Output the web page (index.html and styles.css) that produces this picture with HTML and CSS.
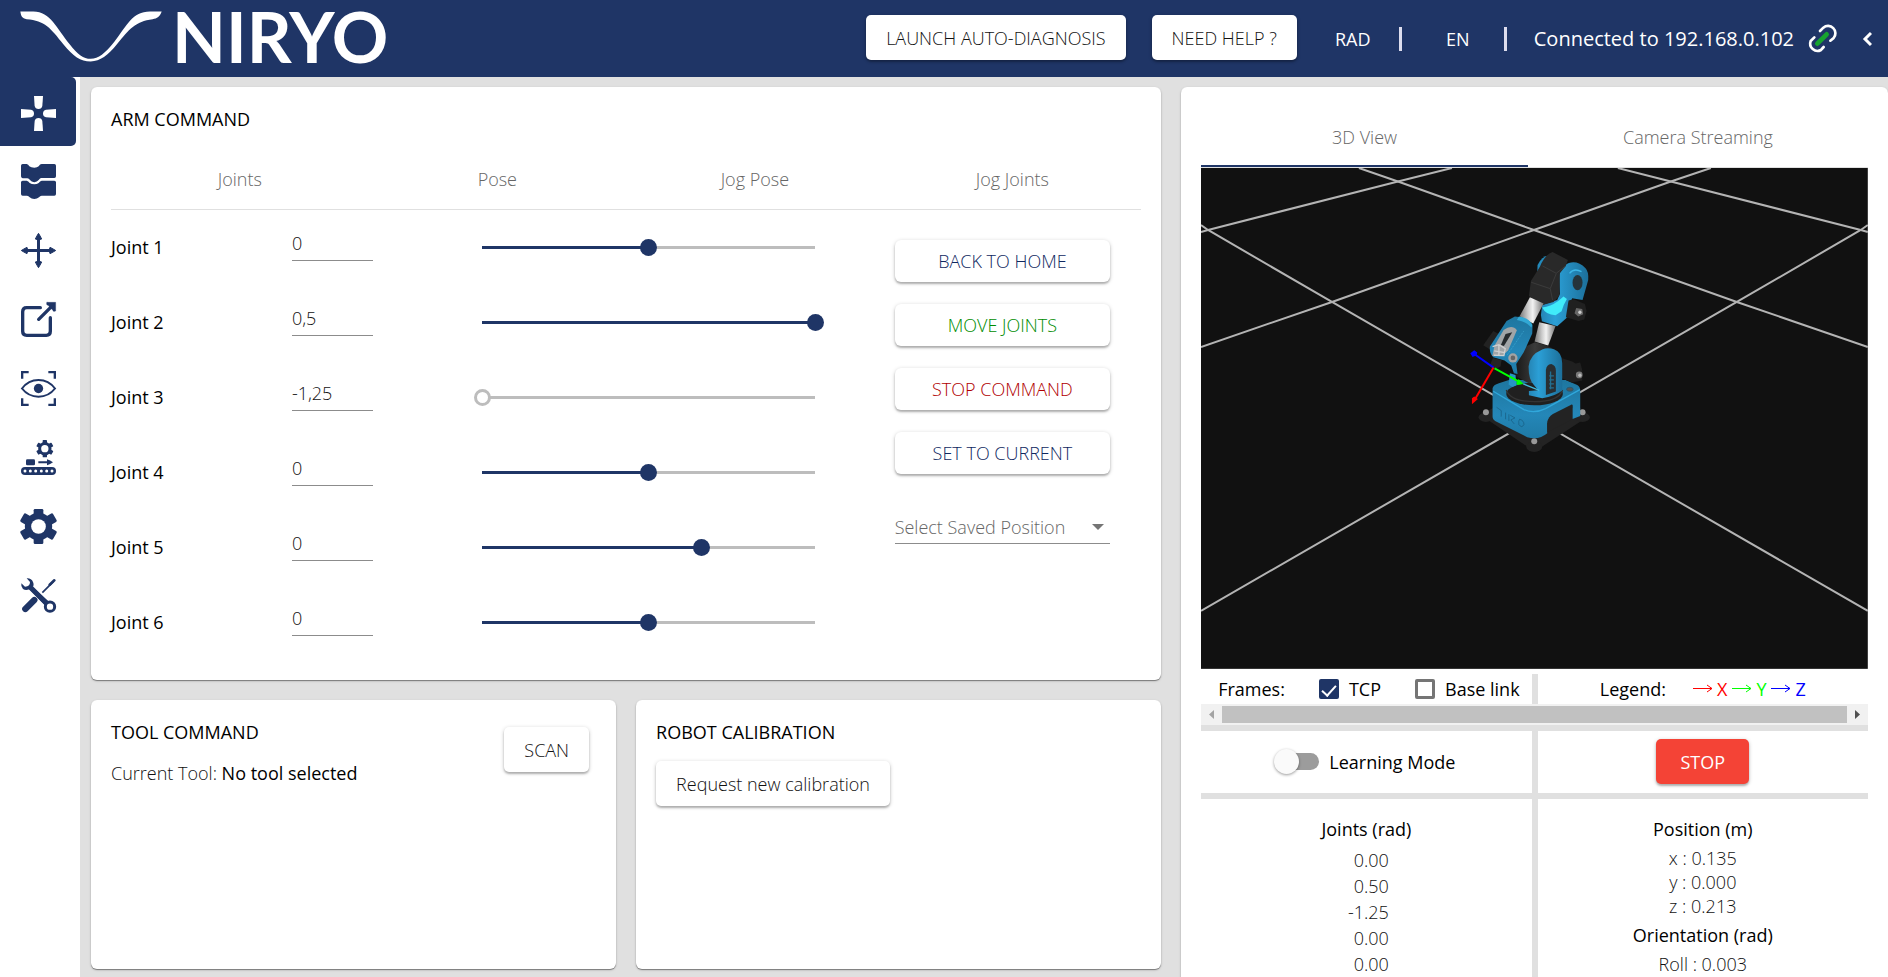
FILE: index.html
```html
<!DOCTYPE html>
<html lang="en">
<head>
<meta charset="utf-8">
<title>Niryo Studio</title>
<link rel="stylesheet" href="styles.css">
</head>
<body>
<header class="topbar">
  <a class="brand" href="#" aria-label="Niryo home">
    <svg class="brand-wave" viewBox="0 0 426 152" aria-hidden="true"><path fill="#fff" d="M1 1H40C92 2 110 52 149 99C174 131 190 142 212 143C236 142 254 128 283 92C322 42 336 2 390 1H425C420 17 411 22 398 24C346 30 327 55 292 98C263 134 241 150 212 151C181 150 160 136 130 99C92 51 75 28 20 24C6 22 3 14 1 1Z"/></svg>
    <span class="brand-name">NIRYO</span>
  </a>
  <div class="top-actions">
    <button class="btn">LAUNCH AUTO-DIAGNOSIS</button>
    <button class="btn">NEED HELP ?</button>
  </div>
  <div class="top-settings">
    <button class="top-link">RAD</button>
    <button class="top-link">EN</button>
  </div>
  <div class="connection">
    <span>Connected to 192.168.0.102</span>
    <svg class="link-icon" viewBox="0 0 90 90" fill="none" stroke-linecap="round" aria-hidden="true">
      <g stroke="#fff" stroke-width="8"><path d="M39 21L49 11A22 22 0 0 1 80 42L70 50"/><path d="M22 40L11 51A22 22 0 0 0 42 78L50 69"/></g>
      <path d="M31 59L59 31" stroke="#17a32f" stroke-width="14"/>
    </svg>
    <button class="collapse" aria-label="Collapse panel"><svg viewBox="0 0 10 16"><path d="M9 2L3 8L9 14" fill="none" stroke="#fff" stroke-width="3"/></svg></button>
  </div>
</header>

<div class="shell">
  <nav class="sidebar" aria-label="Main">
    <a class="nav-item active" href="#" aria-label="Arm command"><svg viewBox="0 0 105 105" fill="currentColor"><path id="pad" d="M39 0H66L64 30Q62 39 52.500 39Q43 39 41 30Z"/><use href="#pad" transform="rotate(90 52.500 52.500)"/><use href="#pad" transform="rotate(180 52.500 52.500)"/><use href="#pad" transform="rotate(270 52.500 52.500)"/></svg></a>
    <a class="nav-item" href="#" aria-label="Blocks"><svg viewBox="0 0 105 105" fill="currentColor"><path d="M5 0H17Q22 1 25 7Q30 11 40 11Q49 11 53 7Q57 0 62 0H100Q105 0 105 5V37Q105 42 100 42H60Q56 43 53 48Q48 54 40 55Q31 54 27 48Q24 43 19 43H5Q0 42 0 37V5Q0 0 5 0Z"/><path d="M5 50H17Q22 51 26 57Q32 61 40 61Q48 61 53 57Q57 51 62 50H100Q105 50 105 55V90Q105 95 100 95H62Q57 96 54 100Q48 105 40 105Q31 105 26 100Q23 96 18 95H5Q0 95 0 90V55Q0 50 5 50Z"/></svg></a>
    <a class="nav-item" href="#" aria-label="Move"><svg viewBox="0 0 105 105" fill="currentColor" stroke="currentColor"><path d="M52.500 10V95M10 52.500H95" stroke-width="9"/><path id="tip" stroke-width="3" stroke-linejoin="round" d="M52.500 1Q57 8 62 18Q52 23 43 18Q48 8 52.500 1Z"/><use href="#tip" transform="rotate(90 52.500 52.500)"/><use href="#tip" transform="rotate(180 52.500 52.500)"/><use href="#tip" transform="rotate(270 52.500 52.500)"/></svg></a>
    <a class="nav-item" href="#" aria-label="Export"><svg viewBox="0 0 105 105" fill="none" stroke="currentColor" stroke-width="10" stroke-linecap="round"><path d="M58 17H17Q5 17 5 29V88Q5 100 17 100H76Q88 100 88 88V47M53 52L92 13"/><path d="M78 1H104V27Q96 31 95 24L81 10Q74 9 78 1Z" fill="currentColor" stroke-width="1"/></svg></a>
    <a class="nav-item" href="#" aria-label="Vision"><svg viewBox="0 0 105 105" fill="none" stroke="currentColor" stroke-width="7"><path d="M3.500 23V3.500H23M82 3.500H101.500V23M101.500 82V101.500H82M23 101.500H3.500V82"/><path stroke-width="6" d="M3 52.500Q22 27 52.500 27Q83 27 102 52.500Q83 77 52.500 77Q22 77 3 52.500Z"/><circle cx="52.500" cy="52.500" r="14" fill="currentColor" stroke="none"/></svg></a>
    <a class="nav-item" href="#" aria-label="Conveyor"><svg viewBox="0 0 105 105" fill="currentColor"><g><rect x="65" y="0" width="13" height="52" rx="2"/><rect x="65" y="0" width="13" height="52" rx="2" transform="rotate(60 71.500 26)"/><rect x="65" y="0" width="13" height="52" rx="2" transform="rotate(120 71.500 26)"/><circle cx="71.500" cy="26" r="20"/><circle cx="71.500" cy="26" r="11" fill="#fff"/></g><rect x="15" y="58" width="27" height="18" rx="4"/><path d="M52 64H78V58Q88 61 96 67Q88 73 78 76V70H52Z"/><rect x="0" y="81" width="105" height="24" rx="12"/><g fill="#fff"><circle cx="12" cy="93" r="4.500"/><circle cx="28" cy="93" r="4.500"/><circle cx="44" cy="93" r="4.500"/><circle cx="61" cy="93" r="4.500"/><circle cx="77" cy="93" r="4.500"/><circle cx="93" cy="93" r="4.500"/></g></svg></a>
    <a class="nav-item" href="#" aria-label="Settings"><svg viewBox="0 0 105 105" fill="currentColor"><rect x="38" y="0" width="29" height="105" rx="4"/><rect x="38" y="-4" width="29" height="113" rx="4" transform="rotate(60 52.500 52.500)"/><rect x="38" y="-4" width="29" height="113" rx="4" transform="rotate(120 52.500 52.500)"/><circle cx="52.500" cy="52.500" r="41"/><circle cx="52.500" cy="52.500" r="22" fill="#fff"/></svg></a>
    <a class="nav-item" href="#" aria-label="Tools"><svg viewBox="0 0 105 105" fill="none" stroke="currentColor"><path d="M64 44L97 11" stroke-width="5"/><path d="M86 20L100 7" stroke-width="8" stroke-linecap="round"/><path d="M13 93L40 66" stroke-width="19" stroke-linecap="round"/><path d="M17 1Q31 0 36 12Q40 22 35 27L84 71L72 82L25 34Q14 39 6 33Q-1 26 1 16L12 26Q20 26 24 22Q27 17 27 12Z" fill="currentColor" stroke="#fff" stroke-width="3" paint-order="stroke"/><path d="M28 28L76 76" stroke-width="15"/><circle cx="87" cy="86" r="14" stroke-width="9" fill="#fff"/></svg></a>
  </nav>

  <main class="content">
    <div class="column commands">
      <section class="card arm">
        <h2>ARM COMMAND</h2>
        <div class="tabs four" role="tablist">
          <button role="tab">Joints</button><button role="tab">Pose</button><button role="tab">Jog Pose</button><button role="tab">Jog Joints</button>
        </div>
        <div class="arm-body">
          <div class="joints">
            <div class="joint"><label for="j1">Joint 1</label><input class="value" id="j1" type="text" value="0"><input class="slider" type="range" aria-label="Joint 1" min="-2.9" max="2.9" step="any" value="0" style="--fill:50%"></div>
            <div class="joint"><label for="j2">Joint 2</label><input class="value" id="j2" type="text" value="0,5"><input class="slider" type="range" aria-label="Joint 2" min="-1.9" max="0.5" step="any" value="0.5" style="--fill:100%"></div>
            <div class="joint"><label for="j3">Joint 3</label><input class="value" id="j3" type="text" value="-1,25"><input class="slider at-min" type="range" aria-label="Joint 3" min="-1.25" max="1.5" step="any" value="-1.25" style="--fill:0%"></div>
            <div class="joint"><label for="j4">Joint 4</label><input class="value" id="j4" type="text" value="0"><input class="slider" type="range" aria-label="Joint 4" min="-2" max="2" step="any" value="0" style="--fill:50%"></div>
            <div class="joint"><label for="j5">Joint 5</label><input class="value" id="j5" type="text" value="0"><input class="slider" type="range" aria-label="Joint 5" min="-1.92" max="1" step="any" value="0" style="--fill:66%"></div>
            <div class="joint"><label for="j6">Joint 6</label><input class="value" id="j6" type="text" value="0"><input class="slider" type="range" aria-label="Joint 6" min="-2.5" max="2.5" step="any" value="0" style="--fill:50%"></div>
          </div>
          <div class="arm-actions">
            <button class="btn slim navy">BACK TO HOME</button>
            <button class="btn slim green">MOVE JOINTS</button>
            <button class="btn slim red">STOP COMMAND</button>
            <button class="btn slim navy">SET TO CURRENT</button>
            <div class="select-wrap">
              <select aria-label="Saved position"><option>Select Saved Position</option></select>
              <svg viewBox="0 0 12 6" aria-hidden="true"><path d="M0 0H12L6 6Z" fill="#757575"/></svg>
            </div>
          </div>
        </div>
      </section>
      <section class="card tool">
        <div>
          <h2>TOOL COMMAND</h2>
          <p>Current Tool: <strong>No tool selected</strong></p>
        </div>
        <button class="btn">SCAN</button>
      </section>
      <section class="card calibration">
        <h2>ROBOT CALIBRATION</h2>
        <button class="btn">Request new calibration</button>
      </section>
    </div>

    <div class="column viewer">
      <section class="card view-card">
        <div class="tabs two" role="tablist">
          <button role="tab" aria-selected="true">3D View</button><button role="tab">Camera Streaming</button>
        </div>
        <svg class="scene" viewBox="0 0 667 501" preserveAspectRatio="xMidYMid slice" role="img" aria-label="Robot 3D view">
          <defs>
            <linearGradient id="blueH"><stop offset="0" stop-color="#2585b5"/><stop offset=".3" stop-color="#2b9fd6"/><stop offset="1" stop-color="#1c6f9a"/></linearGradient>
            <linearGradient id="blueV" x2="0" y2="1"><stop offset="0" stop-color="#1e769f"/><stop offset=".6" stop-color="#2487b8"/><stop offset="1" stop-color="#1f7aa6"/></linearGradient>
            <linearGradient id="steel"><stop offset="0" stop-color="#777"/><stop offset=".35" stop-color="#ccc"/><stop offset=".55" stop-color="#f2f2f2"/><stop offset="1" stop-color="#777"/></linearGradient>
            <linearGradient id="dark"><stop offset="0" stop-color="#151515"/><stop offset=".5" stop-color="#3b3b3b"/><stop offset="1" stop-color="#1b1b1b"/></linearGradient>
          </defs>
          <rect width="667" height="501" fill="#111"/>
          <g stroke="#b4b4b4" stroke-width="2" fill="none">
            <path d="M158 0L197 13.500L333 62L536 134L667 179"/><path d="M417 0L470 13.500L660 62L667 64"/>
            <path d="M510 0L470 13.500L333 62L131 134L0 179"/><path d="M251 0L197 13.500L7 62L0 64"/>
            <path d="M0 57L7 62L131 134L667 443"/><path d="M667 57L660 62L536 134L0 443"/>
          </g>
          <g transform="translate(198 52) scale(.33333)">
            <g fill="#232323"><path d="M245 585L290 560L545 565L568 590L430 680L400 690Z"/><ellipse cx="261" cy="592" rx="22" ry="14"/><ellipse cx="551" cy="592" rx="22" ry="14"/><ellipse cx="406" cy="680" rx="24" ry="16"/></g>
            <g fill="#999"><circle cx="261" cy="577" r="9"/><circle cx="551" cy="577" r="9"/><circle cx="406" cy="664" r="9"/></g>
            <path d="M281 505Q283 495 300 490L330 480H500L535 495Q544 500 544 512V588L521 597V555L445 610V640Q420 662 385 652L290 604Q281 600 281 590Z" fill="url(#blueV)"/>
            <path d="M283 514L375 569Q405 583 440 566L543 509" fill="none" stroke="#30a8dc" stroke-width="4"/>
            <path d="M445 638V606Q449 590 462 582L520 553V598Z" fill="#232323"/>
            <path d="M293 562L307 572V590M320 578V598M330 583V603M334 586L348 594L336 600L346 612M362 598Q376 602 375 614Q369 626 360 614Q358 602 362 598" fill="none" stroke="#155577" stroke-width="3" opacity=".6"/>
            <ellipse cx="407" cy="522" rx="85" ry="34" fill="#202020"/><path d="M322 510Q335 545 407 545Q479 545 491 510" fill="none" stroke="#343434" stroke-width="4"/>
            <ellipse cx="513" cy="508" rx="10" ry="6" fill="#555" stroke="#1b5876" stroke-width="2"/>
            <path d="M333 460L350 465L352 497L340 501L329 494Z" fill="#2794c6"/>
            <path d="M490 415L520 425L530 431L544 428L550 450V482L518 488L489 475Z" fill="#202020"/><circle cx="541" cy="465" r="10" fill="#777"/><circle cx="543" cy="466" r="5" fill="#bbb"/>
            <path d="M343 425L380 380L408 367L442 376L473 392V465L390 490L352 470Z" fill="url(#dark)"/>
            <path d="M389 440Q392 405 430 389Q445 382 465 388Q490 397 490 430V512Q468 530 430 535L390 526V513L418 511L405 495Q389 480 389 440Z" fill="url(#blueH)"/>
            <path d="M441 450Q443 433 457 432Q471 436 471 452V515L441 525Z" fill="#292f33"/>
            <path d="M451 504H465M451 492H465M451 480H465M451 468H465M455 455V508" stroke="#236f91" stroke-width="4"/>
            <path d="M421 307L470 318L448 377L407 365Z" fill="url(#steel)"/>
            <path d="M426 285L430 255L475 240L483 222L481 165Q485 138 510 129Q537 121 560 145Q570 156 568 180L551 240L520 235L509 262L508 290L475 319L429 304Z" fill="url(#blueH)"/>
            <path d="M430 263Q455 260 477 244L494 230L504 237Q492 257 488 274L470 286Q440 285 430 263Z" fill="#40ebfa"/>
            <ellipse cx="536" cy="188" rx="15" ry="23" fill="#25343b"/>
            <path d="M512 160Q525 143 548 155" stroke="#3cb7e8" stroke-width="4" fill="none"/>
            <path d="M509 242L524 238L558 252L563 273L556 299L539 303L501 292Z" fill="#202020"/><path d="M532 264L550 267L553 283L538 290L527 280Z" fill="#666"/><circle cx="543" cy="277" r="5" fill="#ccc"/>
            <path d="M415 162L416 135Q428 110 451 106L467 114L430 150Z" fill="#238abb"/>
            <path d="M423 140Q438 104 461 96L507 120L501 137L483 160L481 227L464 246L430 255L390 228L396 183Z" fill="#292929"/>
            <path d="M431 138L472 160L500 138M472 161L454 206L397 187M454 206L461 240" stroke="#3b3b3b" stroke-width="3" fill="none"/>
            <path d="M393 232L434 251L403 311L362 289Z" fill="url(#steel)"/>
            <path d="M283 333L253 376L277 391L300 371V342Z" fill="#222"/>
            <path d="M323 303L348 290Q378 290 401 315L400 341L374 398L352 432L356 462L345 460L337 437L317 422L283 412Q271 400 273 380Z" fill="url(#blueV)"/>
            <path d="M360 290Q388 293 400 313L398 323Q382 305 354 300Z" fill="#31a8d5"/>
            <path d="M314 330Q340 312 354 331L328 391L310 408H280L287 377Z" fill="#a1a5a7"/><path d="M320 342L340 337L315 378L306 375Z" fill="#262b2e"/>
            <path d="M281 380L300 374L319 386L315 407L285 406M300 373V405M286 393L318 398" stroke="#d0d0d0" stroke-width="4" fill="none"/>
            <path d="M374 334L323 408" stroke="#47b4db" stroke-width="2" stroke-dasharray="3 3"/>
            <circle cx="342" cy="414" r="14" fill="#a3a3a3"/><circle cx="342" cy="414" r="7" fill="#666"/>
            <path d="M282 414L308 420L305 440L288 449L272 438Z" fill="#242424"/>
            <g stroke-width="6" fill="none"><path d="M284 443L227 403" stroke="#00f"/><path d="M284 443L230 535" stroke="#f00"/><path d="M287 445L360 485" stroke="#0f0"/></g>
            <path d="M214 400L226 391L235 398L233 406L221 411Z" fill="#00f"/><path d="M219 553V535L226 530L237 537Z" fill="#f00"/><path d="M374 492L355 495L352 490L359 477Z" fill="#0f0"/><path d="M373 492L421 511" stroke="#42b9db" stroke-width="4"/>
          </g>
        </svg>

        <div class="info-row frames-row">
          <div class="frames">
            <span>Frames:</span>
            <label><input type="checkbox" checked>TCP</label>
            <label><input type="checkbox">Base link</label>
          </div>
          <div class="legend">
            <span>Legend:</span>
            <div class="axes">
              <span class="axis x"><svg viewBox="0 0 20 9"><path d="M0 4.500H19M14 1L19 4.500L14 8"/></svg>X</span>
              <span class="axis y"><svg viewBox="0 0 20 9"><path d="M0 4.500H19M14 1L19 4.500L14 8"/></svg>Y</span>
              <span class="axis z"><svg viewBox="0 0 20 9"><path d="M0 4.500H19M14 1L19 4.500L14 8"/></svg>Z</span>
            </div>
          </div>
        </div>
        <div class="scrollbar" aria-hidden="true">
          <svg viewBox="0 0 21 21"><path d="M13 6V15L8 10.500Z" fill="#a3a3a3"/></svg>
          <div class="scroll-thumb"></div>
          <svg viewBox="0 0 21 21"><path d="M8 6V15L13 10.500Z" fill="#505050"/></svg>
        </div>
        <div class="info-row mode-row">
          <div class="learning"><label><input class="switch" type="checkbox" role="switch">Learning Mode</label></div>
          <div class="stop-cell"><button class="btn stop">STOP</button></div>
        </div>
        <div class="info-row state-row">
          <div class="state">
            <h3>Joints (rad)</h3>
            <ul class="joint-values"><li>0.00</li><li>0.50</li><li>-1.25</li><li>0.00</li><li>0.00</li></ul>
          </div>
          <div class="state">
            <h3>Position (m)</h3>
            <ul class="pose-values"><li>x : 0.135</li><li>y : 0.000</li><li>z : 0.213</li></ul>
            <h3>Orientation (rad)</h3>
            <ul class="pose-values"><li>Roll : 0.003</li></ul>
          </div>
        </div>
      </section>
    </div>
  </main>
</div>
</body>
</html>
```

FILE: styles.css
```css
:root {
  --navy: #1f3566;
  --gray: #e0e0e0;
  --ink: #111;
}

* { box-sizing: border-box; }

body {
  display: flex;
  flex-direction: column;
  height: 100vh;
  margin: 0;
  overflow: hidden;
  background: var(--gray);
  color: var(--ink);
  font: 300 18px/24px "Open Sans", sans-serif;
}

button, input, select { font: inherit; color: inherit; }
button { cursor: pointer; }
h2, h3, p, ul { margin: 0; padding: 0; }
h2, h3 { font-size: 18px; font-weight: 400; line-height: 24px; color: #000; }
strong, label { font-weight: 400; color: #000; }
ul { list-style: none; }
svg { display: block; }

.btn {
  height: 45px;
  padding: 0 20px;
  border: 0;
  border-radius: 5px;
  background: #fff;
  box-shadow: 0 2px 2px rgba(0, 0, 0, .22), 0 1px 4px rgba(0, 0, 0, .2);
}
.btn.slim { height: 42px; border-radius: 6px; }
.btn.navy { color: #10285f; }
.btn.green { color: #008c00; }
.btn.red { color: #b00000; }
.btn.stop { padding: 0 24px; background: #f44336; color: #fff; font-weight: 400; }

/* Header */
.topbar {
  display: flex;
  flex: none;
  align-items: center;
  height: 77px;
  background: var(--navy);
  color: #fff;
}
.brand {
  display: flex;
  align-items: center;
  gap: 10px;
  margin-right: auto;
  padding: 0 0 4px 20px;
  color: #fff;
  text-decoration: none;
}
.brand-wave { width: 142px; height: 51px; }
.brand-name { font: 700 70px/73px Lato, sans-serif; }
.top-actions { display: flex; gap: 26px; padding-bottom: 2px; color: var(--ink); }
.top-settings { display: flex; }
.top-link {
  width: 105px;
  height: 24px;
  padding: 0 0 0 10px;
  border: 0;
  border-right: 3px solid #dde;
  background: none;
  font-weight: 400;
}
.connection {
  display: flex;
  align-items: center;
  gap: 13px;
  padding: 0 16px 0 27px;
  font-size: 20px;
  font-weight: 400;
}
.link-icon { width: 30px; height: 30px; }
.collapse { margin-left: 12px; padding: 0; border: 0; background: none; }
.collapse svg { width: 10px; height: 16px; }

/* Navigation */
.shell { display: flex; flex: 1; min-height: 0; }
.sidebar {
  display: flex;
  flex: none;
  flex-direction: column;
  gap: 1px;
  width: 80px;
  background: #fff;
}
.nav-item {
  display: flex;
  align-items: center;
  width: 76px;
  height: 68px;
  padding-left: 21px;
  border-radius: 0 5px 5px 0;
  color: var(--navy);
}
.nav-item.active { height: 69px; padding-top: 4px; background: var(--navy); color: #fff; }
.nav-item svg { width: 35px; height: 35px; overflow: visible; }

/* Panels: each column carries half of the gutter; the last one runs off the right edge */
.content {
  display: grid;
  flex: 1;
  grid-template-columns: 3fr 2fr;
  min-width: 0;
  margin-right: -10px;
  padding: 10px 0 8px 1px;
}
.column { min-width: 0; min-height: 0; padding: 0 10px; }
.commands {
  display: grid;
  grid-template: auto 1fr / 1fr 1fr;
  gap: 20px;
}
.card {
  border-radius: 6px;
  background: #fff;
  box-shadow: 0 1px 1px rgba(0, 0, 0, .4), 0 1px 3px rgba(0, 0, 0, .15);
}
.tabs { display: grid; border-bottom: 1px solid var(--gray); }
.tabs.four { grid-template-columns: repeat(4, 1fr); }
.tabs.two { grid-template-columns: 49fr 51fr; }
.tabs button {
  height: 62px;
  padding: 2px 0 0;
  border: 0;
  background: none;
  color: #666;
}
.tabs.two button { height: 60px; padding: 0; }
.tabs button[aria-selected="true"] { box-shadow: inset 0 -2px var(--navy); }

.arm { grid-column: 1 / -1; padding: 20px; }
.arm .tabs { margin-top: 16px; }
.arm-body { display: grid; grid-template-columns: 3fr 1fr; }
.joint {
  display: grid;
  grid-template-columns: 181fr 190fr 402fr;
  align-items: center;
  height: 75px;
}
.joint label { padding-bottom: 2px; }
.value {
  width: 81px;
  height: 32px;
  margin-bottom: 5px;
  padding: 0 0 4px;
  border: 0;
  border-bottom: 1px solid #8c8c8c;
  background: none;
}
.slider {
  height: 17px;
  margin: 0 60px 0 -8px;
  appearance: none;
  background: linear-gradient(to right, var(--navy) var(--fill), #bdbdbd var(--fill)) center / calc(100% - 17px) 3px no-repeat;
}
.slider::-webkit-slider-thumb {
  width: 17px;
  height: 17px;
  appearance: none;
  border-radius: 50%;
  background: var(--navy);
}
.slider.at-min::-webkit-slider-thumb { border: 3px solid #bdbdbd; background: #fff; }

.arm-actions {
  display: flex;
  flex-direction: column;
  gap: 22px;
  padding: 30px 31px 0 11px;
}
.select-wrap { position: relative; margin-top: 15px; }
.select-wrap select {
  width: 100%;
  height: 33px;
  padding: 0;
  appearance: none;
  border: 0;
  border-bottom: 1px solid #8c8c8c;
  background: none;
  color: #666;
}
.select-wrap svg {
  position: absolute;
  top: 13px;
  right: 6px;
  width: 12px;
  height: 6px;
  pointer-events: none;
}

.tool { display: flex; align-items: flex-start; justify-content: space-between; padding: 20px; }
.tool p { margin-top: 17px; }
.tool .btn { margin: 7px 7px 0 0; }
.calibration { padding: 20px; }
.calibration .btn { margin-top: 17px; }

.view-card { height: 100%; min-height: 920px; padding: 20px 20px 0; }
.scene { width: 100%; aspect-ratio: 667 / 501; }

.info-row {
  display: grid;
  grid-template-columns: 1fr 1fr;
  gap: 6px;
  background: linear-gradient(var(--gray), var(--gray)) center / 6px 100% no-repeat;
}
.frames-row { margin-top: 5px; }
.frames, .legend { display: flex; align-items: center; height: 30px; font-weight: 400; color: #000; }
.frames { padding-left: 17px; }
.frames label { display: flex; align-items: center; gap: 10px; margin-left: 34px; }
.frames input {
  display: grid;
  width: 20px;
  height: 20px;
  margin: 0;
  place-items: start center;
  appearance: none;
  border: 3px solid #757575;
  border-radius: 2px;
}
.frames input:checked { border-color: var(--navy); background: var(--navy); }
.frames input:checked::after {
  width: 6px;
  height: 12px;
  border: solid #fff;
  border-width: 0 2px 2px 0;
  content: "";
  rotate: 42deg;
}
.legend { justify-content: center; gap: 27px; }
.axes { display: flex; gap: 5px; }
.axis { display: flex; align-items: center; gap: 4px; }
.axis svg { width: 20px; height: 9px; fill: none; stroke: currentColor; }
.axis.x { color: #f00; }
.axis.y { color: #0f0; }
.axis.z { color: #00f; }

.scrollbar { display: flex; align-items: center; height: 21px; background: #f1f1f1; }
.scrollbar svg { width: 21px; height: 21px; }
.scroll-thumb { flex: 1; height: 17px; background: #c1c1c1; }

.mode-row { border: solid var(--gray); border-width: 6px 0; }
.learning, .stop-cell { display: flex; align-items: center; justify-content: center; height: 62px; }
.learning label { display: flex; align-items: center; gap: 10px; }
.switch {
  display: flex;
  align-items: center;
  width: 42px;
  height: 17px;
  margin: 0;
  appearance: none;
  border-radius: 9px;
  background: #9c9c9c;
}
.switch::before {
  width: 25px;
  height: 25px;
  margin-left: -3px;
  border-radius: 50%;
  background: #fafafa;
  box-shadow: 0 1px 3px rgba(0, 0, 0, .4);
  content: "";
}

.state-row { height: 190px; }
.state { padding-top: 18px; text-align: center; }
.joint-values { width: fit-content; margin: 6px auto 0; padding-left: 4px; line-height: 26px; text-align: right; }
.pose-values { margin: 5px 0; }
```
